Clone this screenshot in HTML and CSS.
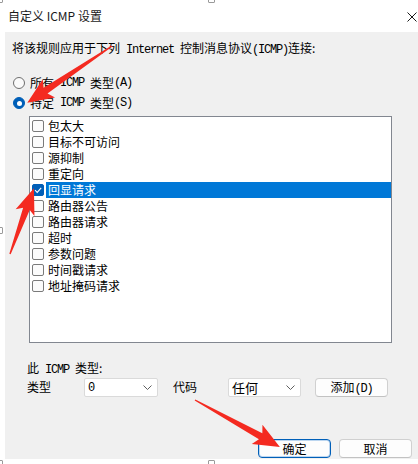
FILE: index.html
```html
<!DOCTYPE html>
<html>
<head>
  <meta charset="UTF-8">
  <title>自定义 ICMP 设置</title>
  <link rel="stylesheet" href="styles.css">
</head>
<body>

  <div class="window">
    <div class="titlebar">
      <span class="title">自定义 ICMP 设置</span>
      <svg class="close" width="10" height="10" viewBox="0 0 10 10"><path d="M0.5 0.5 L9.5 9.5 M9.5 0.5 L0.5 9.5" stroke="#1a1a1a" stroke-width="1"/></svg>
    </div>

    <div class="dialog">
      <p class="intro">将该规则应用于下列<span class="en"> Internet </span>控制消息协议<span class="en">(ICMP)</span>连接:</p>

      <div class="radio-row"><span class="radio"></span>所有<span class="en"> ICMP </span>类型<span class="en">(A)</span></div>
      <div class="radio-row"><span class="radio checked"></span>特定<span class="en"> ICMP </span>类型<span class="en">(S)</span></div>

      <ul class="listbox">
        <li class="item"><span class="check"></span><span class="text">包太大</span></li>
        <li class="item"><span class="check"></span><span class="text">目标不可访问</span></li>
        <li class="item"><span class="check"></span><span class="text">源抑制</span></li>
        <li class="item"><span class="check"></span><span class="text">重定向</span></li>
        <li class="item selected"><span class="check checked"><svg width="10" height="10" viewBox="0 0 10 10"><path d="M2 5.2 L4.2 7.4 L8.2 2.8" fill="none" stroke="#fff" stroke-width="1.1"/></svg></span><span class="text">回显请求</span></li>
        <li class="item"><span class="check"></span><span class="text">路由器公告</span></li>
        <li class="item"><span class="check"></span><span class="text">路由器请求</span></li>
        <li class="item"><span class="check"></span><span class="text">超时</span></li>
        <li class="item"><span class="check"></span><span class="text">参数问题</span></li>
        <li class="item"><span class="check"></span><span class="text">时间戳请求</span></li>
        <li class="item"><span class="check"></span><span class="text">地址掩码请求</span></li>
      </ul>

      <p class="type-heading">此<span class="en"> ICMP </span>类型:</p>

      <div class="type-row">
        <span class="field-label">类型</span>
        <div class="select sel-type"><span class="en">0</span><svg width="9" height="5" viewBox="0 0 9 5"><path d="M0.5 0.5 L4.5 4.5 L8.5 0.5" fill="none" stroke="#5f5f5f"/></svg></div>
        <span class="field-label code-label">代码</span>
        <div class="select sel-code"><span>任何</span><svg width="9" height="5" viewBox="0 0 9 5"><path d="M0.5 0.5 L4.5 4.5 L8.5 0.5" fill="none" stroke="#5f5f5f"/></svg></div>
        <button class="btn add-btn">添加<span class="en">(D)</span></button>
      </div>

      <div class="footer">
        <button class="btn primary">确定</button>
        <button class="btn">取消</button>
      </div>
    </div>

    <!-- red annotation arrows -->
    <svg class="annot" width="418" height="464" viewBox="0 0 418 464">
      <g fill="#f42a20">
        <polygon transform="translate(112,46) rotate(146.15)" points="0,-0.7 80,-3.5 76,-11 102,0 76,11 80,3.5 0,0.7"/>
        <polygon transform="translate(10,254) rotate(-70)" points="0,-0.7 48,-3.5 44,-10 70,0 44,10 48,3.5 0,0.7"/>
        <polygon transform="translate(195,400) rotate(28.94)" points="0,-0.7 75,-3.5 71,-11 97,0 71,11 75,3.5 0,0.7"/>
      </g>
    </svg>

    <span class="handle h-tl"></span>
    <span class="handle h-top"></span>
    <span class="handle h-left"></span>
    <span class="handle h-bl"></span>
    <span class="handle h-bottom"></span>
  </div>

</body>
</html>
```

FILE: styles.css
```css
body {
  margin: 0;
  background: #fff;
  font-family: "Noto Sans CJK SC", sans-serif;
  font-size: 12px;
  line-height: 16px;
  color: #000;
}

.window {
  position: relative;
  width: 418px;
  height: 464px;
  overflow: hidden;
}

.titlebar {
  height: 32px;
  display: flex;
  align-items: center;
  justify-content: space-between;
  padding: 0 1px 0 8px;
}

.title {
  font-size: 12px;
  color: #1a1a1a;
}

.close {
  display: block;
  margin-top: 2px;
}

.dialog {
  margin-left: 5px;
  height: 427px;
  box-sizing: border-box;
  padding: 8px 0 0 7px;
  background: #f0f0f0;
  display: flex;
  flex-direction: column;
}

.en {
  font-family: "Liberation Mono", monospace;
  font-size: 12px;
  letter-spacing: -1.2px;
  white-space: pre;
}

.intro {
  margin: 0;
  height: 16px;
}

.radio-row {
  height: 20px;
  display: flex;
  align-items: center;
  margin-left: 1px;
  white-space: pre;
}

.radio-row:first-of-type {
  margin-top: 17px;
}

.radio {
  width: 12px;
  height: 12px;
  box-sizing: border-box;
  border: 1px solid #6e6e6e;
  border-radius: 50%;
  background: #fafafa;
  margin-right: 5px;
  display: flex;
  align-items: center;
  justify-content: center;
}

.radio.checked {
  border-color: #005fb8;
  background: #005fb8;
}

.radio.checked::after {
  content: "";
  width: 5px;
  height: 5px;
  border-radius: 50%;
  background: #fff;
}

.listbox {
  list-style: none;
  margin: 3px 0 0 17px;
  padding: 1px 0 0 0;
  width: 363px;
  height: 227px;
  box-sizing: border-box;
  border: 1px solid #828790;
  background: #fff;
}

.item {
  height: 16px;
  display: flex;
  align-items: center;
}

.check {
  width: 12px;
  height: 12px;
  box-sizing: border-box;
  margin-left: 2px;
  border: 1px solid #7a7a7a;
  border-radius: 2px;
  background: #fbfbfb;
  display: flex;
  align-items: center;
  justify-content: center;
}

.check.checked {
  border-color: #005fb8;
  background: #005fb8;
}

.check svg {
  display: block;
}

.text {
  flex: 1;
  height: 16px;
  padding-left: 2px;
  margin-left: 2px;
}

.item.selected .text {
  background: #0078d7;
  color: #fff;
}

.type-heading {
  margin: 17px 0 0 15px;
  height: 16px;
}

.type-row {
  margin: 1px 0 0 15px;
  height: 20px;
  display: flex;
  align-items: center;
}

.field-label {
  width: 57px;
}

.code-label {
  width: 55px;
  margin-left: 15px;
}

.select {
  height: 19px;
  box-sizing: border-box;
  border: 1px solid #dadada;
  border-radius: 2px;
  background: #fff;
  display: flex;
  align-items: center;
  justify-content: space-between;
  padding: 0 5px 0 3px;
  margin-top: 1px;
}

.select svg {
  display: block;
}

.sel-type {
  width: 74px;
}

.sel-code {
  width: 73px;
  padding-left: 3px;
  font-size: 13px;
}

.btn {
  font-family: "Noto Sans CJK SC", sans-serif;
  font-size: 12px;
  line-height: 16px;
  width: 73px;
  height: 19px;
  padding: 0;
  box-sizing: border-box;
  border: 1px solid #d0d0d0;
  border-bottom-color: #c2c2c2;
  border-radius: 4px;
  background: #fdfdfd;
  color: #000;
}

.add-btn {
  margin-left: 14px;
}

.footer {
  margin-top: auto;
  display: flex;
  justify-content: flex-end;
  gap: 8px;
  padding: 0 6px 1px 0;
}

.btn.primary {
  border: 1px solid #005fb8;
  box-shadow: inset 0 0 0 1px #bcd6f0;
}

.annot {
  position: absolute;
  top: 0;
  left: 0;
  pointer-events: none;
}

.handle {
  position: absolute;
  width: 7px;
  height: 7px;
  box-sizing: border-box;
  border: 1px solid #9a9a9a;
  border-radius: 1px;
  background: #fff;
}

.h-tl { top: -4px; left: -4px; }
.h-top { top: -4px; left: 208px; }
.h-left { top: 227px; left: -4px; }
.h-bl { top: 460px; left: -4px; }
.h-bottom { top: 460px; left: 208px; }
```
